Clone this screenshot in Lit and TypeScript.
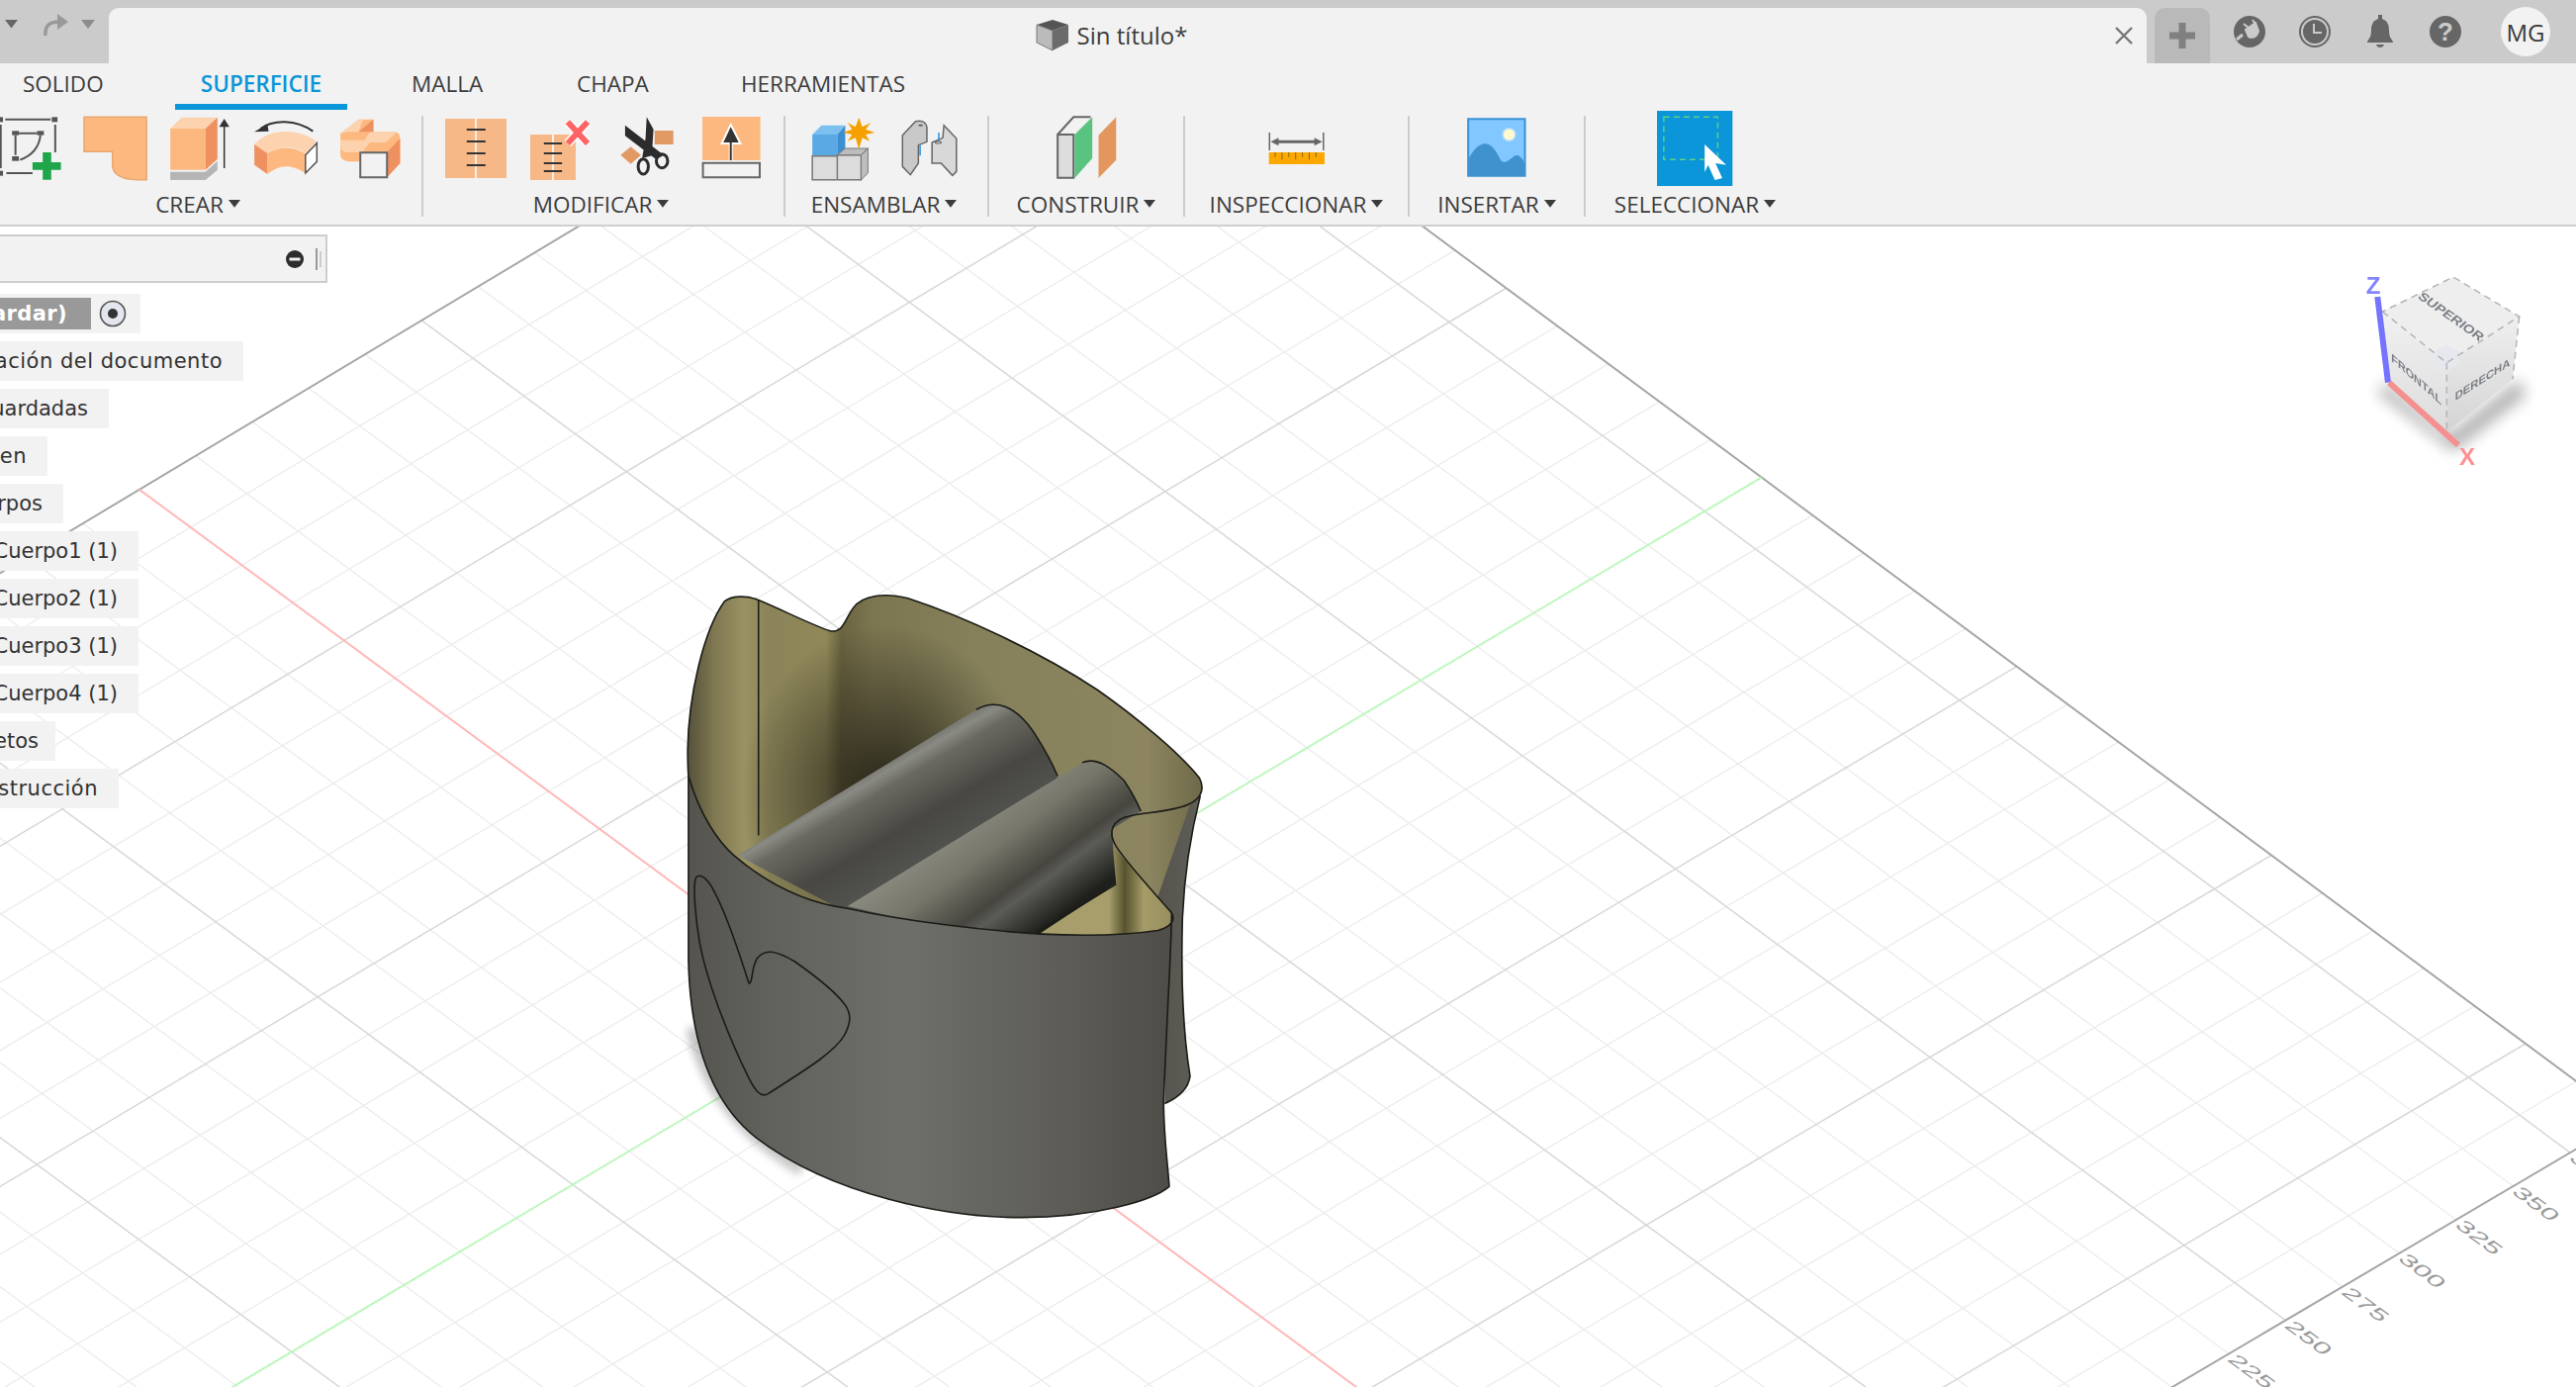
import { LitElement, html, css, svg } from 'lit';
import { customElement } from 'lit/decorators.js';

type Pt = [number, number];

// solve the plane homography (u,v in minor grid cells) -> page pixels
function homography(src: Pt[], dst: Pt[]) {
  const m: number[][] = [];
  src.forEach(([u, v], i) => {
    const [x, y] = dst[i];
    m.push([u, v, 1, 0, 0, 0, -u * x, -v * x, x]);
    m.push([0, 0, 0, u, v, 1, -u * y, -v * y, y]);
  });
  for (let c = 0; c < 8; c++) {
    let p = c;
    for (let r = c + 1; r < 8; r++) if (Math.abs(m[r][c]) > Math.abs(m[p][c])) p = r;
    [m[c], m[p]] = [m[p], m[c]];
    for (let r = 0; r < 8; r++) {
      if (r === c) continue;
      const f = m[r][c] / m[c][c];
      for (let k = c; k < 9; k++) m[r][k] -= f * m[c][k];
    }
  }
  const h = m.map((row, i) => row[8] / row[i]);
  return (u: number, v: number): Pt => {
    const w = h[6] * u + h[7] * v + 1;
    return [(h[0] * u + h[1] * v + h[2]) / w, (h[3] * u + h[4] * v + h[5]) / w];
  };
}

const project = homography(
  [[0, 0], [0, 16], [15, 16], [17, 10]],
  [[863.8, 1028], [1780.7, 482.6], [2553, 1055], [2310.4, 1334.6]],
);

const U_MIN = -14, U_MAX = 17, V_MIN = -30, V_MAX = 16;

function gridLines() {
  const out = [];
  const line = (a: Pt, b: Pt, cls: string) =>
    svg`<line class=${cls} x1=${a[0]} y1=${a[1]} x2=${b[0]} y2=${b[1]}></line>`;
  for (const major of [false, true]) {
    for (let u = U_MIN + 1; u < U_MAX; u++) {
      if ((u % 5 === 0) === major && u !== 0)
        out.push(line(project(u, V_MIN), project(u, V_MAX), major ? 'major' : 'minor'));
    }
    for (let v = V_MIN + 1; v < V_MAX; v++) {
      if ((v % 5 === 0) === major && v !== 0)
        out.push(line(project(U_MIN, v), project(U_MAX, v), major ? 'major' : 'minor'));
    }
  }
  out.push(line(project(U_MIN, V_MAX), project(U_MAX, V_MAX), 'edge'));
  out.push(line(project(U_MIN, V_MIN), project(U_MIN, V_MAX), 'edge'));
  out.push(line(project(U_MAX, V_MIN), project(U_MAX, V_MAX), 'edge'));
  out.push(line(project(U_MIN, 0), project(U_MAX, 0), 'axis-x'));
  out.push(line(project(0, V_MIN), project(0, V_MAX), 'axis-y'));
  return out;
}

function gridLabels() {
  const out = [];
  for (let v = 9; v <= 15; v++) {
    const [x, y] = project(17, v);
    out.push(svg`<text class="tick" text-anchor="middle"
      transform="matrix(1.1 .82 -.74 .46 ${x + 23} ${y + 18})" y="7">${v * 25}</text>`);
  }
  return out;
}

// ribbon icons are traced in the stretched crop coordinates, so the viewBox is not square
const icon = (x0: number, x1: number, body: unknown) => html`
  <div class="cell">
    <svg width=${(x1 - x0) / 1.742} height="76" viewBox="${x0} 336 ${x1 - x0} 228" preserveAspectRatio="none">${body}</svg>
  </div>`;

const ORANGE = '#fdb87f', LIGHT = '#fcd3ae', DARK = '#ee9060', STITCH = '#f7b888';

const icons = {
  sketch: svg`
    <g fill="none" stroke="#555" stroke-width="2">
      <path d="M10 362H90M2 378V510M98 378V462M12 525H58M34 404H66M28 410V470M72 410C70 440 60 470 36 485"></path>
    </g>
    <g fill="#555">
      <rect x="-4" y="355" width="10" height="15"></rect><rect x="92" y="355" width="10" height="15"></rect>
      <rect x="-4" y="518" width="10" height="15"></rect><rect x="22" y="397" width="12" height="13"></rect>
      <rect x="66" y="397" width="12" height="13"></rect><rect x="22" y="474" width="12" height="14"></rect>
    </g>
    <path d="M76 462H91V492H108V515H91V545H76V515H58V492H76Z" fill="#1fa64a"></path>`,
  patch: svg`<path d="M147 355H257V545H240C215 545 197 530 197 500V460H147Z" fill=${ORANGE} stroke="#e8a76e" stroke-width="1.5"></path>`,
  extrude: svg`
    <path d="M300 390L320 356H383L362 390Z" fill=${LIGHT}></path>
    <rect x="300" y="390" width="62" height="125" fill=${ORANGE}></rect>
    <path d="M362 390L383 356V482L362 515Z" fill=${DARK}></path>
    <path d="M300 521H362L383 488V515L362 546H300Z" fill="#b5b5b5"></path>
    <path d="M395 510V382" stroke="#333" stroke-width="1.5"></path>
    <path d="M386 385L395 360L404 385Z" fill="#333"></path>`,
  revolve: svg`
    <path d="M550 398C520 362 480 362 458 390" fill="none" stroke="#333" stroke-width="2"></path>
    <path d="M447 400L470 376L472 398Z" fill="#333"></path>
    <path d="M447 438C470 392 520 385 556 428L537 468C520 440 495 440 470 465Z" fill=${LIGHT}></path>
    <path d="M447 438V500L470 528V465Z" fill=${DARK}></path>
    <path d="M470 465C495 440 520 445 537 468V525C510 495 490 500 470 528Z" fill=${ORANGE}></path>
    <path d="M537 470L557 434V490L537 525Z" fill="#fff" stroke="#555" stroke-width="1.5"></path>`,
  sweep: svg`
    <path d="M600 405L632 362H658V400H695Q705 402 705 420V495L682 538V465H634V490H615Q600 485 600 470Z" fill=${ORANGE}></path>
    <path d="M600 405L632 362H640L632 400H612ZM652 400H700L680 432H640ZM600 425H655L638 462H612Q600 460 600 440Z" fill=${LIGHT}></path>
    <path d="M682 462L705 420V495L682 538ZM632 400L658 362V400Z" fill=${DARK}></path>
    <rect x="635" y="463" width="47" height="75" fill="#f2f2f2" stroke="#666" stroke-width="2"></rect>`,
  stitch: svg`
    <rect x="784" y="360" width="108" height="180" fill=${STITCH}></rect>
    <path d="M838 360V540" stroke="#fff" stroke-width="1.5"></path>
    <path d="M822 393H855M822 429H855M822 465H855M822 501H855" stroke="#333" stroke-width="2"></path>`,
  unstitch: svg`
    <rect x="934" y="408" width="80" height="138" fill=${STITCH}></rect>
    <path d="M974 408V546" stroke="#fff" stroke-width="1.5"></path>
    <path d="M958 435H990M958 465H990M958 495H990M958 519H990" stroke="#333" stroke-width="2"></path>
    <path d="M1000 370L1035 435M1035 370L1000 435" stroke="#fff" stroke-width="9"></path>
    <path d="M1000 370L1035 435M1035 370L1000 435" stroke="#ff6464" stroke-width="6"></path>`,
  trim: svg`
    <rect x="1152" y="396" width="33" height="42" fill="#e29a65"></rect>
    <path d="M1092 470L1110 445L1128 470L1110 497Z" fill="#e29a65"></path>
    <path d="M1100 380L1168 470L1155 484L1100 412ZM1138 355L1150 392L1147 472L1130 480L1136 420Z" fill="#2c2c2c"></path>
    <ellipse cx="1132" cy="505" rx="9" ry="23" fill="none" stroke="#2c2c2c" stroke-width="3"></ellipse>
    <ellipse cx="1165" cy="488" rx="10" ry="21" fill="none" stroke="#2c2c2c" stroke-width="3"></ellipse>`,
  untrim: svg`
    <rect x="1233" y="354" width="102" height="132" fill=${ORANGE}></rect>
    <path d="M1283 486V430M1270 432L1283 385L1297 432Z" fill="#333" stroke="#fff" stroke-width="4" paint-order="stroke"></path>
    <path d="M1283 486V430" stroke="#333" stroke-width="2"></path>
    <rect x="1234" y="494" width="100" height="44" fill="#f2f2f2" stroke="#666" stroke-width="2"></rect>`,
  assemble: svg`
    <path d="M1432 408L1448 380H1490L1476 408Z" fill="#7cc0f0"></path>
    <rect x="1432" y="408" width="44" height="64" fill="#5aa9e4"></rect>
    <path d="M1476 408L1490 380V450L1476 472Z" fill="#3c8fcf"></path>
    <path d="M1432 473H1476V545H1432ZM1476 470H1518V545H1476Z" fill="#dcdcdc" stroke="#777" stroke-width="1.5"></path>
    <path d="M1518 470L1530 450V525L1518 545ZM1476 470L1490 450H1530L1518 470Z" fill="#bdbdbd" stroke="#777" stroke-width="1"></path>
    <path d="M1514 356L1520 385L1535 372L1526 392L1542 402L1526 408L1533 428L1520 418L1514 452L1508 418L1494 428L1502 408L1486 402L1502 392L1494 372L1508 385Z" fill="#f6a000"></path>`,
  joint: svg`
    <path d="M22 410L45 368Q62 362 65 385V430L50 440V495L36 530L22 505Z" fill="#c9c9c9" stroke="#666" stroke-width="1.5"></path>
    <path d="M95 380L117 420V520L110 532L90 495H74V432L93 418Z" fill="#d8d8d8" stroke="#666" stroke-width="1.5"></path>
    <path d="M53 440V472M86 402V435" stroke="#2a8fe0" stroke-width="1.5"></path>
    <ellipse cx="54" cy="380" rx="4" ry="2.5" fill="#555"></ellipse>
    <ellipse cx="85" cy="432" rx="6" ry="3" fill="#fff" stroke="#555"></ellipse>`,
  construct: svg`
    <rect x="294" y="408" width="28" height="131" fill="#ddd" stroke="#666" stroke-width="2"></rect>
    <path d="M294 408L322 355H352" fill="none" stroke="#666" stroke-width="2"></path>
    <path d="M324 408L355 355V480L324 540Z" fill="#59c47f"></path>
    <path d="M366 410L397 355V485L366 540Z" fill="#e3975f"></path>`,
  inspect: svg`
    <path d="M670 402V456M765 402V456" stroke="#666" stroke-width="1.5"></path>
    <path d="M680 430H755" stroke="#666" stroke-width="3"></path>
    <path d="M672 430L686 418V442ZM763 430L749 418V442Z" fill="#666"></path>
    <rect x="669" y="462" width="98" height="36" fill="#fca800"></rect>
    <path d="M680 462V476M692 462V484M704 462V476M716 462V484M728 462V476M740 462V484M752 462V476" stroke="#8a6510" stroke-width="1"></path>`,
  insert: svg`
    <rect x="1018" y="361" width="100" height="172" fill="#82c7ff" stroke="#3b92d4" stroke-width="2"></rect>
    <path d="M1019 534V480C1040 415 1060 425 1075 485C1085 505 1095 470 1105 470Q1115 478 1118 500V534Z" fill="#4092cf"></path>
    <ellipse cx="1090" cy="408" rx="11" ry="19" fill="#fffacd" stroke="#b8dcff" stroke-width="1.5"></ellipse>`,
  select: svg`
    <rect x="1348" y="336" width="133" height="228" fill="#0a96d8"></rect>
    <rect x="1360" y="355" width="95" height="129" fill="none" stroke="#5cd08a" stroke-width="1.5" stroke-dasharray="6 4"></rect>
    <path d="M1432 438L1470 500L1451 495L1463 540L1450 546L1438 500L1432 522Z" fill="#fff"></path>`,
};

const groups = [
  { label: 'CREAR', cls: 'g-crear', items: [icon(-1, 109, icons.sketch), icon(147, 258, icons.patch), icon(298, 408, icons.extrude), icon(445, 559, icons.revolve), icon(598, 707, icons.sweep)] },
  { label: 'MODIFICAR', cls: 'g-mod', items: [icon(784, 892, icons.stitch), icon(934, 1042, icons.unstitch), icon(1088, 1187, icons.trim), icon(1233, 1335, icons.untrim)] },
  { label: 'ENSAMBLAR', cls: 'g-ens', items: [icon(1430, 1544, icons.assemble), icon(18, 120, icons.joint)] },
  { label: 'CONSTRUIR', cls: 'g-con', items: [icon(292, 398, icons.construct)] },
  { label: 'INSPECCIONAR', cls: 'g-ins', items: [icon(666, 770, icons.inspect)] },
  { label: 'INSERTAR', cls: 'g-ist', items: [icon(1016, 1120, icons.insert)] },
  { label: 'SELECCIONAR', cls: 'g-sel', items: [icon(1348, 1481, icons.select)] },
];

const tabs = [
  { name: 'SOLIDO', cls: 't-solido' },
  { name: 'SUPERFICIE', cls: 't-sup active' },
  { name: 'MALLA', cls: 't-malla' },
  { name: 'CHAPA', cls: 't-chapa' },
  { name: 'HERRAMIENTAS', cls: 't-herr' },
];

const rows = [
  { text: 'Sin título (Sin guardar)', width: 142, cls: 'selected' },
  { text: 'Configuración del documento', width: 246, cls: 'wide' },
  { text: 'Vistas guardadas', width: 110, cls: '' },
  { text: 'Origen', width: 48, cls: 'wide' },
  { text: 'Cuerpos', width: 64, cls: '' },
  { text: 'Cuerpo1 (1)', width: 140, cls: '' },
  { text: 'Cuerpo2 (1)', width: 140, cls: '' },
  { text: 'Cuerpo3 (1)', width: 140, cls: '' },
  { text: 'Cuerpo4 (1)', width: 140, cls: '' },
  { text: 'Bocetos', width: 56, cls: 'tight' },
  { text: 'Construcción', width: 120, cls: 'wide' },
];

const INNER = 'M118 420C120 300 160 150 215 85C235 70 280 72 305 82C370 105 450 140 495 152C530 155 530 130 555 100C580 70 640 65 700 78C850 120 1050 200 1200 285C1300 345 1420 430 1470 485C1482 505 1480 530 1445 545L1300 900H300L125 700Z';
const FRONT = 'M120 480C150 570 200 630 240 660C350 740 450 770 540 780C700 810 900 830 1050 838C1150 842 1270 842 1360 830C1395 822 1408 805 1396 790C1398 830 1385 1000 1375 1220C1376 1300 1385 1350 1390 1410C1350 1440 1200 1480 1000 1480C800 1480 500 1430 300 1300C180 1220 125 1080 120 900Z';

const part = svg`
  <defs>
    <linearGradient id="inner" gradientUnits="userSpaceOnUse" x1="118" y1="0" x2="1470" y2="0">
      <stop offset="0" stop-color="#55513a"></stop><stop offset=".05" stop-color="#7d7650"></stop>
      <stop offset=".11" stop-color="#9a9263"></stop><stop offset=".16" stop-color="#8b8459"></stop>
      <stop offset=".27" stop-color="#908859"></stop><stop offset=".3" stop-color="#6a6340"></stop>
      <stop offset=".36" stop-color="#7c7550"></stop><stop offset=".55" stop-color="#85805a"></stop>
      <stop offset=".9" stop-color="#8c8560"></stop><stop offset="1" stop-color="#6f6a4a"></stop>
    </linearGradient>
    <radialGradient id="well" gradientUnits="userSpaceOnUse" cx="640" cy="520" r="380">
      <stop offset="0" stop-color="#1c1b12" stop-opacity=".9"></stop>
      <stop offset="1" stop-color="#1c1b12" stop-opacity="0"></stop>
    </radialGradient>
    <linearGradient id="front" gradientUnits="userSpaceOnUse" x1="120" y1="0" x2="1390" y2="0">
      <stop offset="0" stop-color="#55544e"></stop><stop offset=".18" stop-color="#62625c"></stop>
      <stop offset=".45" stop-color="#6e6f6a"></stop><stop offset=".75" stop-color="#5f5e58"></stop>
      <stop offset="1" stop-color="#4f4d47"></stop>
    </linearGradient>
    <linearGradient id="back" gradientUnits="userSpaceOnUse" x1="1240" y1="0" x2="1470" y2="0">
      <stop offset="0" stop-color="#4b4a45"></stop><stop offset="1" stop-color="#5e5d56"></stop>
    </linearGradient>
    <linearGradient id="cylA" gradientUnits="userSpaceOnUse" x1="590" y1="460" x2="740" y2="760">
      <stop offset="0" stop-color="#6b6a63"></stop><stop offset=".1" stop-color="#8a8a84"></stop>
      <stop offset=".2" stop-color="#6a6961"></stop><stop offset=".5" stop-color="#484742"></stop>
      <stop offset="1" stop-color="#5a5b58"></stop>
    </linearGradient>
    <linearGradient id="cylB" gradientUnits="userSpaceOnUse" x1="830" y1="590" x2="1000" y2="860">
      <stop offset="0" stop-color="#8b8a80"></stop><stop offset=".3" stop-color="#77766a"></stop>
      <stop offset=".62" stop-color="#46453f"></stop><stop offset=".72" stop-color="#5c5c56"></stop>
      <stop offset="1" stop-color="#1f1f1b"></stop>
    </linearGradient>
    <linearGradient id="nook" gradientUnits="userSpaceOnUse" x1="1230" y1="0" x2="1400" y2="0">
      <stop offset="0" stop-color="#a79e6b"></stop><stop offset=".25" stop-color="#57532f"></stop>
      <stop offset=".55" stop-color="#a59c68"></stop><stop offset="1" stop-color="#958d5e"></stop>
    </linearGradient>
    <filter id="soft" x="-20%" y="-20%" width="140%" height="140%"><feGaussianBlur stdDeviation="10"></feGaussianBlur></filter>
  </defs>
  <path d="M130 1050C170 1190 260 1290 420 1370" fill="none" stroke="#000" stroke-opacity=".22" stroke-width="14" filter="url(#soft)"></path>
  <path d="M1240 600C1240 570 1290 570 1340 565C1400 560 1450 550 1472 525C1450 600 1430 700 1425 800C1420 950 1430 1080 1445 1160C1440 1190 1410 1210 1378 1222L1380 830Z" fill="url(#back)"></path>
  <path d=${INNER} fill="url(#inner)"></path>
  <path d=${INNER} fill="url(#well)"></path>
  <path d="M250 660L880 330C930 305 985 320 1035 385C1065 425 1085 460 1095 480L1000 800L540 790Z" fill="url(#cylA)"></path>
  <path d="M540 775L1160 450C1200 435 1240 465 1270 490C1290 515 1305 540 1315 560L1240 600C1240 640 1245 680 1250 725L1040 845H900Z" fill="url(#cylB)"></path>
  <path d="M1050 836L1252 722L1244 640C1270 670 1340 735 1396 790C1408 805 1395 822 1360 830C1270 842 1150 842 1050 836Z" fill="url(#nook)"></path>
  <path d=${FRONT} fill="url(#front)"></path>
  <g class="edges">
    <path d="M120 480C118 460 118 440 118 420C120 300 160 150 215 85C235 70 280 72 305 82C370 105 450 140 495 152C530 155 530 130 555 100C580 70 640 65 700 78C850 120 1050 200 1200 285C1300 345 1420 430 1470 485C1482 505 1480 530 1440 545C1400 560 1340 562 1290 570C1235 578 1228 610 1250 640C1280 680 1340 735 1396 790"></path>
    <path d="M305 82V615"></path>
    <path d=${FRONT}></path>
    <path d="M880 330C930 305 985 320 1035 385C1065 425 1085 460 1095 480"></path>
    <path d="M1160 450C1200 435 1240 465 1270 490C1290 515 1305 540 1315 560"></path>
    <path d="M1250 725L1040 835"></path>
    <path d="M1472 525C1450 600 1430 700 1425 800C1420 950 1430 1080 1445 1160C1440 1190 1410 1210 1378 1222" stroke-width="1.2"></path>
    <path d="M140 710C150 700 170 710 190 745C230 810 260 900 280 950C290 950 285 920 300 895C320 870 350 875 400 900C450 930 510 970 535 1000C550 1020 550 1040 530 1070C500 1110 420 1150 330 1200C310 1210 295 1190 280 1165C230 1080 170 950 150 860C140 810 130 730 140 710Z" stroke-width="1.3"></path>
  </g>`;

const viewCube = svg`
  <defs>
    <linearGradient id="cubeL" x1="0" y1="0" x2="0" y2="1"><stop offset="0" stop-color="#f1f1f1"></stop><stop offset="1" stop-color="#dcdcdc"></stop></linearGradient>
    <linearGradient id="cubeR" x1="0" y1="0" x2="0" y2="1"><stop offset="0" stop-color="#efefef"></stop><stop offset="1" stop-color="#d4d4d4"></stop></linearGradient>
    <filter id="cubeShadow" x="-40%" y="-40%" width="180%" height="180%"><feGaussianBlur stdDeviation="22"></feGaussianBlur></filter>
  </defs>
  <path d="M215 410L400 570L620 400L640 450L420 620L190 440Z" fill="#000" opacity=".3" filter="url(#cubeShadow)"></path>
  <path d="M420 90L620 210L400 350L205 195Z" fill="#eeeeee"></path>
  <path d="M205 195L400 350V560L225 410Z" fill="url(#cubeL)"></path>
  <path d="M400 350L620 210L600 400L400 560Z" fill="url(#cubeR)"></path>
  <path d="M398 296L440 318V352L400 378L362 352V318Z" fill="#e6e8ee"></path>
  <g class="cube-edge">
    <path d="M205 195L400 350L620 210L420 90Z"></path>
    <path d="M400 350V560M620 210L600 400"></path>
  </g>
  <text class="cube-text" transform="matrix(.82 .58 -.62 .6 310 152)" font-size="44">SUPERIOR</text>
  <text class="cube-text" transform="matrix(.9 .8 0 .95 232 344)" font-size="36">FRONTAL</text>
  <text class="cube-text" transform="matrix(.94 -.6 0 .95 425 465)" font-size="36">DERECHA</text>
  <path d="M190 150L222 410" stroke="#7474ff" stroke-width="6" fill="none"></path>
  <path d="M225 410L435 600" stroke="#f59090" stroke-width="6" fill="none"></path>
  <text class="cube-z" x="155" y="140" font-size="72">Z</text>
  <text class="cube-x" x="438" y="660" font-size="72">X</text>`;

@customElement('app-root')
export class AppRoot extends LitElement {
  static styles = css`
    :host {
      display: block;
      width: 2604px;
      height: 1402px;
      overflow: hidden;
      background: #fff;
      font-family: 'Open Sans', 'Liberation Sans', sans-serif;
      color: #3c3c3c;
    }
    svg { display: block; overflow: visible; }
    svg * { vector-effect: non-scaling-stroke; }

    .titlebar { display: flex; height: 64px; background: #cbcbcb; }
    .history { display: flex; align-items: center; width: 110px; padding-bottom: 15px; box-sizing: border-box; }
    .caret-a { margin-left: 5px; }
    .redo { margin-left: 25px; }
    .caret-b { margin-left: 13px; }
    .doc-tab {
      display: flex; align-items: center; width: 2060px; height: 56px; margin-top: 8px;
      background: #f2f2f2; border-radius: 10px 10px 0 0; box-sizing: border-box; padding: 0 14px 0 0;
    }
    .doc-title { flex: 1; display: flex; justify-content: center; align-items: center; gap: 9px; font-size: 24px; }
    .doc-title span { line-height: 32px; }
    .plus-tab { display: flex; align-items: center; justify-content: center; width: 56px; height: 56px; margin: 8px 0 0 8px; background: #b9b9b9; border-radius: 10px 10px 0 0; }
    .status { display: flex; align-items: center; height: 64px; gap: 34px; margin-left: 24px; }
    .avatar {
      width: 50px; height: 50px; margin-left: 6px; border-radius: 50%; background: #f2f2f2;
      display: flex; align-items: center; justify-content: center; font-size: 24px; color: #3a3a3a;
    }

    .ribbon { height: 163px; background: #f2f2f2; border-bottom: 2px solid #cfcfcf; overflow: hidden; }
    .tabs { display: flex; height: 48px; }
    .tab { font-size: 22.5px; line-height: 42px; white-space: nowrap; height: 41px; }
    .t-solido { margin-left: 23px; width: 154px; }
    .t-sup { width: 174px; text-align: center; border-bottom: 6px solid #0a96d8; color: #0a96d8; font-weight: 600; }
    .t-malla { margin-left: 65px; width: 167px; }
    .t-chapa { width: 166px; }

    .tools { display: flex; height: 115px; margin-left: -21px; }
    .group { display: flex; flex-direction: column; align-items: center; }
    .g-crear { width: 447px; }
    .g-mod { width: 364px; }
    .g-ens { width: 204px; }
    .g-con { width: 196px; }
    .g-ins { width: 225px; }
    .g-ist { width: 176px; }
    .g-sel { width: 221px; }
    .icons { display: flex; height: 76px; }
    .cell { width: 86px; display: flex; justify-content: center; }
    .label { display: flex; align-items: center; gap: 5px; height: 36px; font-size: 22.5px; white-space: nowrap; }
    .g-crear .label, .g-mod .label, .g-ens .label { margin-right: 5px; }
    .sep { width: 2px; height: 102px; margin-top: 5px; background: #cccccc; flex: none; }

    .viewport { position: relative; height: 1173px; overflow: hidden; background: #fff; }
    .scene { position: absolute; inset: 0; }
    .minor { stroke: #ededed; stroke-width: 1.4; }
    .major { stroke: #d9d9d9; stroke-width: 1.6; }
    .edge { stroke: #a6a6a6; stroke-width: 2; }
    .axis-x { stroke: #ffb8b8; stroke-width: 2; }
    .axis-y { stroke: #bdf7bd; stroke-width: 2; }
    .tick { font-family: 'Liberation Sans', sans-serif; font-size: 22px; fill: #9a9a9a; }
    .edges path { fill: none; stroke: #1b1b17; stroke-width: 1.6; }
    .cube-edge path { fill: none; stroke: #b4b4b4; stroke-width: 1.5; stroke-dasharray: 7 5; }
    .cube-text { font-family: 'Liberation Sans', sans-serif; fill: #7d8088; font-weight: 700; }
    .cube-z { font-family: 'Liberation Sans', sans-serif; fill: #8585ff; font-weight: 700; }
    .cube-x { font-family: 'Liberation Sans', sans-serif; fill: #ff9090; font-weight: 700; }
    .cube-wrap { filter: blur(.8px); }

    .browser-head {
      position: absolute; top: 8px; left: -4px; width: 335px; height: 49px; box-sizing: border-box;
      display: flex; align-items: center; justify-content: flex-end; gap: 12px; padding-right: 4px;
      background: #f2f2f2; border: 2px solid #cdcdcd;
    }
    .tree { position: absolute; top: 68px; left: 0; display: flex; flex-direction: column; gap: 8px; align-items: flex-start; }
    .row {
      display: flex; align-items: center; justify-content: flex-end; height: 40px; white-space: nowrap;
      background: #f2f2f2; font-family: 'DejaVu Sans', sans-serif; font-size: 21px; color: #333; padding-right: 21px; box-sizing: border-box;
    }
    .row.wide { letter-spacing: .5px; }
    .row.tight { padding-right: 17px; }
    .row.selected { padding-right: 14px; gap: 8px; letter-spacing: .4px; }
    .chip { display: flex; align-items: center; justify-content: flex-end; height: 32px; width: 92px; background: #999; color: #fff; font-weight: 700; padding-right: 24px; box-sizing: border-box; flex: none; }
  `;

  private caret(size: number, color = '#3c3c3c') {
    return html`<svg width=${size} height=${size * 0.65} viewBox="0 0 10 6.5"><path d="M0 0H10L5 6.5Z" fill=${color}></path></svg>`;
  }

  private statusIcons() {
    return html`
      <svg width="32" height="32" viewBox="0 0 32 32">
        <circle cx="16" cy="16" r="16" fill="#666"></circle>
        <path d="M3 24L9 19" stroke="#cbcbcb" stroke-width="3"></path>
        <path d="M10 8L16 13M19 4L23 10M12 14L22 7L25 15C24 21 19 23 15 21Z" fill="#cbcbcb" stroke="#cbcbcb" stroke-width="2"></path>
      </svg>
      <svg width="32" height="32" viewBox="0 0 32 32">
        <circle cx="16" cy="16" r="15" fill="none" stroke="#666" stroke-width="2"></circle>
        <circle cx="16" cy="16" r="12" fill="#666"></circle>
        <path d="M15 8V17H23" fill="none" stroke="#cbcbcb" stroke-width="2"></path>
      </svg>
      <svg width="32" height="34" viewBox="0 0 32 34">
        <path d="M14 0H18V4C24 6 25 11 25 16C25 22 27 24 29 27V28H3V27C5 24 7 22 7 16C7 11 8 6 14 4Z" fill="#666"></path>
        <path d="M12 30H20C19 34 13 34 12 30Z" fill="#666"></path>
      </svg>
      <svg width="32" height="32" viewBox="0 0 32 32">
        <circle cx="16" cy="16" r="16" fill="#666"></circle>
        <text x="16" y="25" text-anchor="middle" font-family="Liberation Sans" font-weight="700" font-size="26" fill="#cbcbcb">?</text>
      </svg>`;
  }

  render() {
    return html`
      <div class="titlebar">
        <div class="history">
          <span class="caret-a">${this.caret(13, '#666')}</span>
          <svg class="redo" width="26" height="24" viewBox="0 0 26 24">
            <path d="M3 23C2 13 7 9 17 9" fill="none" stroke="#999" stroke-width="3.5"></path>
            <path d="M15 1L26 9L15 17Z" fill="#999"></path>
          </svg>
          <span class="caret-b">${this.caret(14, '#8c8c8c')}</span>
        </div>
        <div class="doc-tab">
          <div class="doc-title">
            <svg width="32" height="32" viewBox="0 0 32 32">
              <path d="M0 5L16 0L32 5L16 11Z" fill="#555"></path>
              <path d="M0 5L16 11V31L0 23Z" fill="#bbb" stroke="#777"></path>
              <path d="M32 5L16 11V31L32 23Z" fill="#6b6b6b"></path>
            </svg>
            <span>Sin título*</span>
          </div>
          <svg width="18" height="18" viewBox="0 0 18 18"><path d="M1 1L17 17M17 1L1 17" stroke="#777" stroke-width="2.4"></path></svg>
        </div>
        <div class="plus-tab">
          <svg width="26" height="26" viewBox="0 0 26 26"><path d="M13 0V26M0 13H26" stroke="#808080" stroke-width="7"></path></svg>
        </div>
        <div class="status">${this.statusIcons()}<div class="avatar">MG</div></div>
      </div>

      <div class="ribbon">
        <div class="tabs">
          ${tabs.map(t => html`<div class="tab ${t.cls}">${t.name}</div>`)}
        </div>
        <div class="tools">
          ${groups.map((g, i) => html`
            ${i > 0 ? html`<div class="sep"></div>` : ''}
            <div class="group ${g.cls}">
              <div class="icons">${g.items}</div>
              <div class="label">${g.label}${this.caret(12)}</div>
            </div>`)}
        </div>
      </div>

      <div class="viewport">
        <svg class="scene" width="2604" height="1173" viewBox="0 229 2604 1173">
          ${gridLines()}
          ${gridLabels()}
          <g transform="translate(650 570) scale(.3827 .4464)">${part}</g>
          <g class="cube-wrap" transform="translate(2340 250) scale(.3333)">${viewCube}</g>
        </svg>
        <div class="browser-head">
          <svg width="18" height="18" viewBox="0 0 18 18"><circle cx="9" cy="9" r="9" fill="#2d2d2d"></circle><rect x="3.5" y="7.5" width="11" height="3" fill="#f2f2f2"></rect></svg>
          <svg width="6" height="22" viewBox="0 0 6 22"><path d="M1 0V22" stroke="#999" stroke-width="2"></path><path d="M5 3V19" stroke="#ccc" stroke-width="2"></path></svg>
        </div>
        <div class="tree">
          ${rows.map(r => html`
            <div class="row ${r.cls}" style="width:${r.width}px">
              ${r.cls === 'selected' ? html`
                <div class="chip"><span>${r.text}</span></div>
                <svg width="28" height="28" viewBox="0 0 28 28" style="flex:none">
                  <circle cx="14" cy="14" r="12.5" fill="#e4e6ee" stroke="#555" stroke-width="1.6"></circle>
                  <circle cx="14" cy="14" r="5" fill="#333"></circle>
                </svg>` : html`<span>${r.text}</span>`}
            </div>`)}
        </div>
      </div>
    `;
  }
}
